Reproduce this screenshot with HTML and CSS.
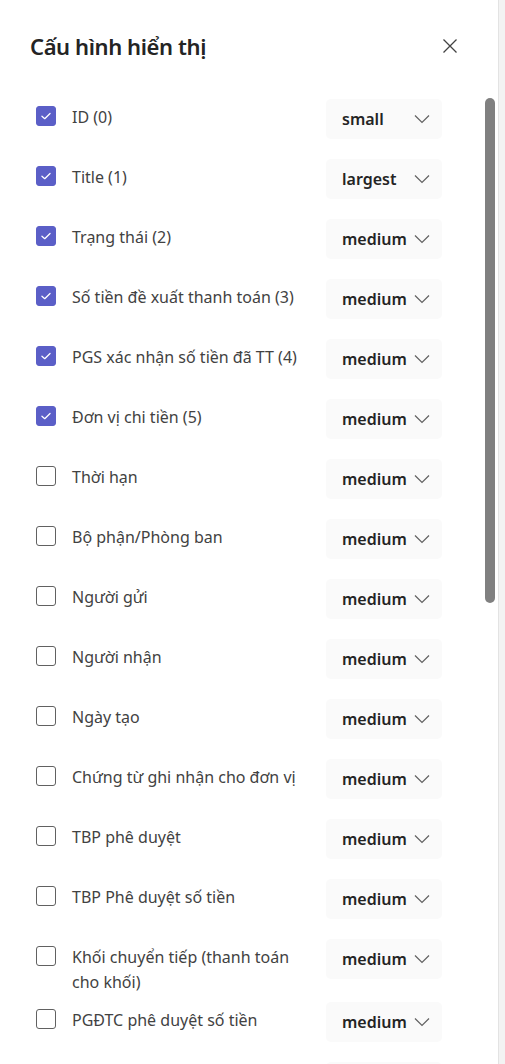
FILE: index.html
```html
<!DOCTYPE html>
<html lang="vi">
<head>
<meta charset="utf-8">
<title>Cấu hình hiển thị</title>
<link rel="stylesheet" href="styles.css">
</head>
<body>
<div class="panel">
  <header class="head">
    <h1 class="title">Cấu hình hiển thị</h1>
    <button class="close" aria-label="Đóng">
      <svg width="16" height="16" viewBox="0 0 16 16"><path d="M1.5 1.5 L14.5 14.5 M14.5 1.5 L1.5 14.5" stroke="#424242" stroke-width="1.3" fill="none"/></svg>
    </button>
  </header>
  <div class="list">
    <div class="row"><span class="cb on"><svg viewBox="0 0 20 20"><path d="M5.5 10.2 L8.6 13 L14.5 7.2" stroke="#fff" stroke-width="1.4" fill="none" stroke-linecap="round" stroke-linejoin="round"/></svg></span><span class="label">ID (0)</span><span class="dd"><span>small</span><svg class="chev" viewBox="0 0 16 10"><path d="M1 1.5 L8 8.5 L15 1.5" stroke="#616161" stroke-width="1.2" fill="none"/></svg></span></div>
    <div class="row"><span class="cb on"><svg viewBox="0 0 20 20"><path d="M5.5 10.2 L8.6 13 L14.5 7.2" stroke="#fff" stroke-width="1.4" fill="none" stroke-linecap="round" stroke-linejoin="round"/></svg></span><span class="label">Title (1)</span><span class="dd"><span>largest</span><svg class="chev" viewBox="0 0 16 10"><path d="M1 1.5 L8 8.5 L15 1.5" stroke="#616161" stroke-width="1.2" fill="none"/></svg></span></div>
    <div class="row"><span class="cb on"><svg viewBox="0 0 20 20"><path d="M5.5 10.2 L8.6 13 L14.5 7.2" stroke="#fff" stroke-width="1.4" fill="none" stroke-linecap="round" stroke-linejoin="round"/></svg></span><span class="label">Trạng thái (2)</span><span class="dd"><span>medium</span><svg class="chev" viewBox="0 0 16 10"><path d="M1 1.5 L8 8.5 L15 1.5" stroke="#616161" stroke-width="1.2" fill="none"/></svg></span></div>
    <div class="row"><span class="cb on"><svg viewBox="0 0 20 20"><path d="M5.5 10.2 L8.6 13 L14.5 7.2" stroke="#fff" stroke-width="1.4" fill="none" stroke-linecap="round" stroke-linejoin="round"/></svg></span><span class="label">Số tiền đề xuất thanh toán (3)</span><span class="dd"><span>medium</span><svg class="chev" viewBox="0 0 16 10"><path d="M1 1.5 L8 8.5 L15 1.5" stroke="#616161" stroke-width="1.2" fill="none"/></svg></span></div>
    <div class="row"><span class="cb on"><svg viewBox="0 0 20 20"><path d="M5.5 10.2 L8.6 13 L14.5 7.2" stroke="#fff" stroke-width="1.4" fill="none" stroke-linecap="round" stroke-linejoin="round"/></svg></span><span class="label">PGS xác nhận số tiền đã TT (4)</span><span class="dd"><span>medium</span><svg class="chev" viewBox="0 0 16 10"><path d="M1 1.5 L8 8.5 L15 1.5" stroke="#616161" stroke-width="1.2" fill="none"/></svg></span></div>
    <div class="row"><span class="cb on"><svg viewBox="0 0 20 20"><path d="M5.5 10.2 L8.6 13 L14.5 7.2" stroke="#fff" stroke-width="1.4" fill="none" stroke-linecap="round" stroke-linejoin="round"/></svg></span><span class="label">Đơn vị chi tiền (5)</span><span class="dd"><span>medium</span><svg class="chev" viewBox="0 0 16 10"><path d="M1 1.5 L8 8.5 L15 1.5" stroke="#616161" stroke-width="1.2" fill="none"/></svg></span></div>
    <div class="row"><span class="cb"></span><span class="label">Thời hạn</span><span class="dd"><span>medium</span><svg class="chev" viewBox="0 0 16 10"><path d="M1 1.5 L8 8.5 L15 1.5" stroke="#616161" stroke-width="1.2" fill="none"/></svg></span></div>
    <div class="row"><span class="cb"></span><span class="label">Bộ phận/Phòng ban</span><span class="dd"><span>medium</span><svg class="chev" viewBox="0 0 16 10"><path d="M1 1.5 L8 8.5 L15 1.5" stroke="#616161" stroke-width="1.2" fill="none"/></svg></span></div>
    <div class="row"><span class="cb"></span><span class="label">Người gửi</span><span class="dd"><span>medium</span><svg class="chev" viewBox="0 0 16 10"><path d="M1 1.5 L8 8.5 L15 1.5" stroke="#616161" stroke-width="1.2" fill="none"/></svg></span></div>
    <div class="row"><span class="cb"></span><span class="label">Người nhận</span><span class="dd"><span>medium</span><svg class="chev" viewBox="0 0 16 10"><path d="M1 1.5 L8 8.5 L15 1.5" stroke="#616161" stroke-width="1.2" fill="none"/></svg></span></div>
    <div class="row"><span class="cb"></span><span class="label">Ngày tạo</span><span class="dd"><span>medium</span><svg class="chev" viewBox="0 0 16 10"><path d="M1 1.5 L8 8.5 L15 1.5" stroke="#616161" stroke-width="1.2" fill="none"/></svg></span></div>
    <div class="row"><span class="cb"></span><span class="label">Chứng từ ghi nhận cho đơn vị</span><span class="dd"><span>medium</span><svg class="chev" viewBox="0 0 16 10"><path d="M1 1.5 L8 8.5 L15 1.5" stroke="#616161" stroke-width="1.2" fill="none"/></svg></span></div>
    <div class="row"><span class="cb"></span><span class="label">TBP phê duyệt</span><span class="dd"><span>medium</span><svg class="chev" viewBox="0 0 16 10"><path d="M1 1.5 L8 8.5 L15 1.5" stroke="#616161" stroke-width="1.2" fill="none"/></svg></span></div>
    <div class="row"><span class="cb"></span><span class="label">TBP Phê duyệt số tiền</span><span class="dd"><span>medium</span><svg class="chev" viewBox="0 0 16 10"><path d="M1 1.5 L8 8.5 L15 1.5" stroke="#616161" stroke-width="1.2" fill="none"/></svg></span></div>
    <div class="row"><span class="cb"></span><span class="label">Khối chuyển tiếp (thanh toán cho khối)</span><span class="dd"><span>medium</span><svg class="chev" viewBox="0 0 16 10"><path d="M1 1.5 L8 8.5 L15 1.5" stroke="#616161" stroke-width="1.2" fill="none"/></svg></span></div>
    <div class="row"><span class="cb"></span><span class="label">PGĐTC phê duyệt số tiền</span><span class="dd"><span>medium</span><svg class="chev" viewBox="0 0 16 10"><path d="M1 1.5 L8 8.5 L15 1.5" stroke="#616161" stroke-width="1.2" fill="none"/></svg></span></div>
    <div class="row"><span class="cb"></span><span class="label"></span><span class="dd"></span></div>
  </div>
  <div class="thumb"></div>
</div>
</body>
</html>
```
FILE: styles.css
```css
html, body {
  margin: 0;
  padding: 0;
  height: 100%;
  overflow: hidden;
}
body {
  background: #f3f3f3;
  font-family: "Noto Sans", "Open Sans", sans-serif;
  color: #242424;
}
.panel {
  position: relative;
  width: 499px;
  height: 1064px;
  background: #fff;
  border-right: 1px solid #e3e3e3;
  box-sizing: border-box;
  overflow: hidden;
}
.head {
  display: flex;
  align-items: center;
  justify-content: space-between;
  padding: 28px 40px 0 30px;
  height: 36px;
}
.title {
  margin: 0;
  font-size: 22px;
  font-weight: 600;
  color: #242424;
  letter-spacing: -0.4px;
}
.close {
  border: 0;
  background: none;
  padding: 0;
  width: 16px;
  height: 16px;
  display: flex;
}
.list {
  display: flex;
  flex-direction: column;
  gap: 20px;
  padding: 35px 0 0 36px;
}
.row {
  display: flex;
  align-items: flex-start;
  width: 406px;
}
.cb {
  flex: none;
  width: 20px;
  height: 20px;
  margin-top: 7px;
  box-sizing: border-box;
  border: 1px solid #616161;
  border-radius: 3px;
  display: flex;
}
.cb.on {
  background: #5b5fc7;
  border-color: #5b5fc7;
}
.cb svg {
  width: 18px;
  height: 18px;
}
.label {
  flex: 1;
  margin: 6px 0 -13px 16px;
  font-size: 16px;
  line-height: 25px;
  color: #424242;
  padding-right: 16px;
}
.dd {
  flex: none;
  width: 116px;
  height: 40px;
  box-sizing: border-box;
  background: #fafafa;
  border-radius: 5px;
  display: flex;
  align-items: center;
  justify-content: space-between;
  padding: 0 12px 0 16px;
  font-size: 16px;
  font-weight: 600;
  color: #242424;
}
.chev {
  width: 16px;
  height: 10px;
}
.thumb {
  position: absolute;
  left: 485px;
  top: 98px;
  width: 10px;
  height: 505px;
  background: #808080;
  border-radius: 5px;
}
```
